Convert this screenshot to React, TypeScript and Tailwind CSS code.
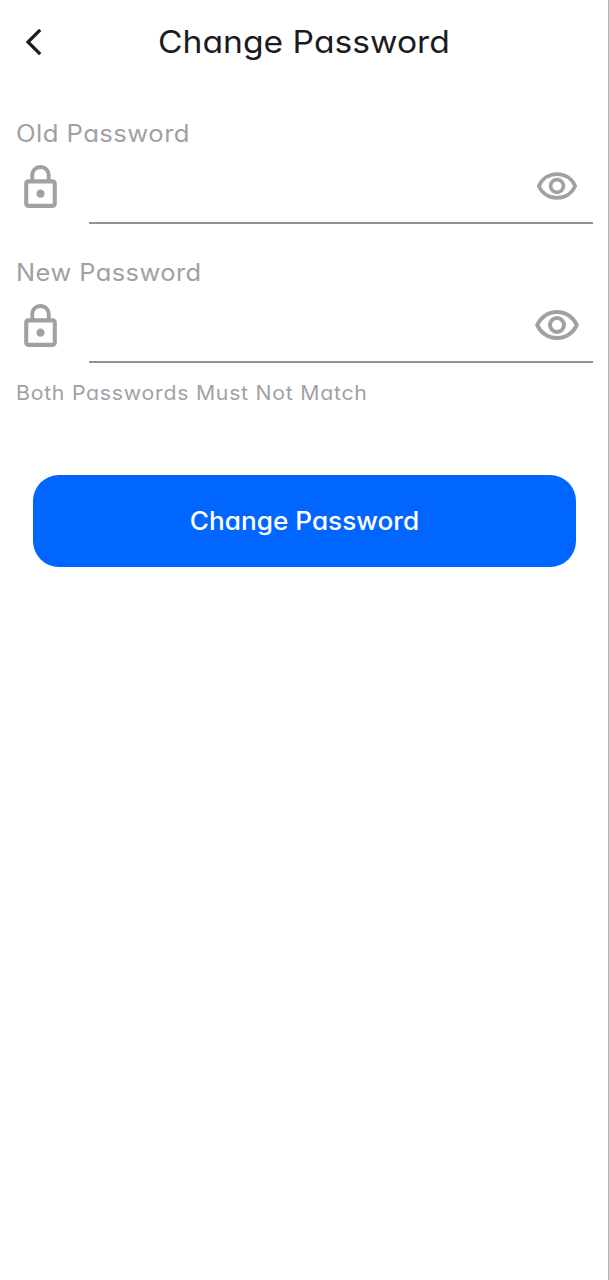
const textFont = "font-['Inter','Open_Sans',sans-serif] [font-feature-settings:'cv11']";

function BackIcon() {
  return (
    <svg className="block h-[32px] w-[24px]" viewBox="0 0 24 32" fill="none" stroke="#1b1b23" strokeWidth="3.2">
      <path d="M16.2 3.8 4 16l12.200 12.200" />
    </svg>
  );
}

function LockIcon() {
  return (
    <svg className="block size-[49px] shrink-0" viewBox="0 0 24 24" fill="#a1a1a4">
      <path d="M12 17c1.1 0 2-.9 2-2s-.9-2-2-2-2 .9-2 2 .9 2 2 2zm6-9h-1V6c0-2.76-2.24-5-5-5S7 3.24 7 6v2H6c-1.1 0-2 .9-2 2v10c0 1.1.9 2 2 2h12c1.1 0 2-.9 2-2V10c0-1.1-.9-2-2-2zM8.9 6c0-1.71 1.39-3.1 3.1-3.1s3.1 1.39 3.1 3.1v2H8.9V6zM18 20H6V10h12v10z" />
    </svg>
  );
}

function EyeIcon({ className }: { className: string }) {
  return (
    <svg className={className} viewBox="0 0 24 24" fill="none" stroke="#a1a1a4" strokeWidth="2" strokeLinejoin="round">
      <path d="M2.1 12C3.8 8.100 7.500 5.500 12 5.500S20.200 8.100 21.900 12C20.200 15.900 16.500 18.500 12 18.500S3.800 15.900 2.100 12Z" />
      <circle cx="12" cy="12" r="3.5" />
    </svg>
  );
}

interface FieldProps {
  label: string;
  labelClass: string;
  eyeClass: string;
}

function PasswordField({ label, labelClass, eyeClass }: FieldProps) {
  return (
    <div>
      <div
        className={`h-[32px] origin-left text-[24px] leading-[32px] tracking-[0.4px] whitespace-nowrap text-[#a1a1a4] ${labelClass}`}
      >
        {label}
      </div>
      <div className="flex h-[74px]">
        <div className="w-[73px] pt-[13px]">
          <LockIcon />
        </div>
        <div className="flex h-full flex-1 items-center justify-end border-b-2 border-[#929295]">
          <div className="flex w-[72px] justify-center">
            <EyeIcon className={eyeClass} />
          </div>
        </div>
      </div>
    </div>
  );
}

export default function App() {
  return (
    <div className={`h-[1280px] w-full overflow-hidden border-r border-[#b3b3b3] bg-white ${textFont}`}>
      <header className="flex h-[84px] items-center pl-[24px]">
        <BackIcon />
        <h1 className="ml-[110px] origin-left scale-x-[1.085] text-[31px] leading-[40px] font-[370] tracking-[0px] whitespace-nowrap text-[#1b1b23]">
          Change Password
        </h1>
      </header>
      <main className="pr-[15px] pl-[16px] pt-[34px]">
        <div className="flex flex-col gap-[33px]">
          <PasswordField label="Old Password" labelClass="scale-x-[1.07]" eyeClass="block size-[44px]" />
          <PasswordField label="New Password" labelClass="scale-x-[1.06]" eyeClass="block size-[48px]" />
        </div>
        <p className="mt-[16px] h-[28px] origin-left scale-x-[1.063] text-[20px] leading-[28px] tracking-[0.7px] whitespace-nowrap text-[#a1a1a4]">
          Both Passwords Must Not Match
        </p>
        <button className="mt-[68px] ml-[17px] block h-[92px] w-[543px] rounded-[26px] bg-[#0066ff] pt-[2px] text-[25px] font-medium whitespace-nowrap text-white">
          <span className="inline-block scale-x-[1.047]">Change Password</span>
        </button>
      </main>
    </div>
  );
}
